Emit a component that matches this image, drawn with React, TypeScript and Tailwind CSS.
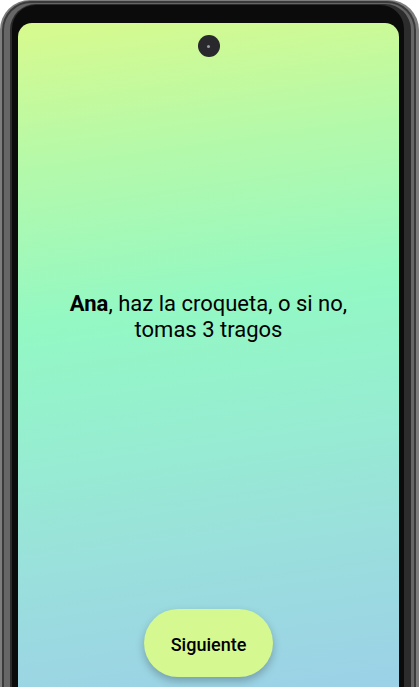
export default function App() {
  return (
    <div className="w-[419px] h-[687px] overflow-hidden bg-white font-['Roboto',sans-serif]">
      {/* phone frame, outer metal rings */}
      <div className="h-[720px] rounded-[30px] bg-[#7d7d7d] pt-[1px] pl-[2px] pr-[3px]">
        <div className="h-full rounded-[29px] bg-[#3a3a3a] pt-[2px] pl-[2px] pr-[2px]">
          <div className="h-full rounded-[27px] bg-[#666666] pt-[1px] pl-[6px] pr-[3px]">
            <div className="h-full rounded-[26px] bg-[#2c2c2c] pt-[1px] pl-[2px] pr-[7px]">
              {/* black bezel */}
              <div className="h-full rounded-[24px] bg-[#0b0b0b] pt-[18px] pl-[6px] pr-[5px]">
                {/* screen */}
                <div className="h-[680px] rounded-[14px] overflow-hidden bg-[linear-gradient(172deg,#d8fa8d_0%,#b4f9aa_20%,#93f8c4_42%,#96eed0_58%,#9ae0dc_75%,#9ccfe8_100%)] flex flex-col items-center">
                  <div className="mt-[12px] w-[22px] h-[22px] rounded-full bg-[#29282c] flex items-center justify-center">
                    <div className="w-[3px] h-[3px] rounded-full bg-[#9a9aa2]" />
                  </div>
                  <p className="mt-[234px] px-[36px] text-center text-[22px] leading-[26px] text-black">
                    <span className="font-bold">Ana</span>, haz la croqueta, o si no, tomas 3 tragos
                  </p>
                  <button className="mt-[266px] w-[129px] h-[68px] rounded-full bg-[#d5f890] pt-[2px] text-[18px] font-medium text-black shadow-[0_4px_8px_rgba(0,0,0,0.25)]">
                    Siguiente
                  </button>
                </div>
              </div>
            </div>
          </div>
        </div>
      </div>
    </div>
  );
}
